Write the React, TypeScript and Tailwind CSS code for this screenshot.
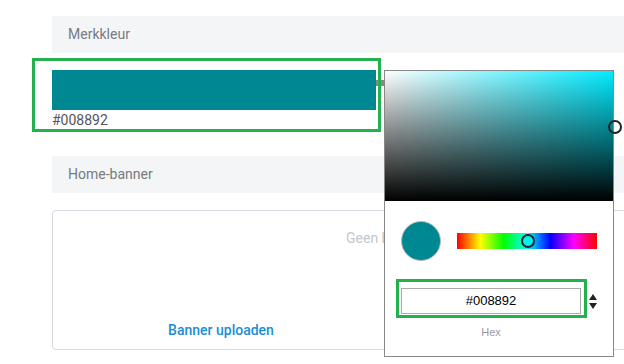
export default function App() {
  return (
    <div className="relative w-[624px] h-[364px] overflow-hidden bg-white font-['Roboto',sans-serif] text-[14px]">
      {/* Page content */}
      <div className="w-[700px] pl-[52px] pt-[16px]">
        <div className="h-[37px] bg-[#f4f5f7] pl-4 flex items-center text-[#777b80]">Merkkleur</div>
        <div className="mt-[17px] h-[40px] w-[324px] bg-[#008892]" />
        <div className="mt-[1px] leading-[18px] text-[#555]">#008892</div>

        <div className="mt-[27px] h-[37px] bg-[#f4f5f7] pl-4 flex items-center text-[#777b80]">Home-banner</div>
        <div className="mt-[17px] h-[140px] border border-[#d5dbe0] rounded-sm flex flex-col">
          <div className="pt-[17px] pl-[293px] text-[#c3c7cb]">Geen banner geüpload</div>
          <div className="mt-auto mb-[8px] w-[336px] text-center font-medium text-[#1b8ed1]">Banner uploaden</div>
        </div>
      </div>

      {/* Popover tab */}
      <div className="absolute left-[376px] top-[80px] w-[8px] h-[6px] bg-[#888]" />

      {/* Colour picker */}
      <div className="absolute left-[384px] top-[70px] w-[230px] h-[287px] bg-white border border-[#888] font-['Liberation_Sans',Arial,sans-serif]">
        <div className="h-[130px] bg-[linear-gradient(to_top,#000,rgba(0,0,0,0)),linear-gradient(to_right,#fff,#00ebff)]" />
        <div className="pt-[20px] pl-[16px] flex items-center">
          <div className="w-[40px] h-[40px] rounded-full bg-[#008892] border border-[#b9b9b9]" />
          <div className="relative ml-[16px] w-[140px] h-[16px] bg-[linear-gradient(to_right,#f00,#ff0,#0f0,#0ff,#00f,#f0f,#f00)]">
            <div className="absolute left-[64px] top-[1px] w-[14px] h-[14px] rounded-full border-2 border-[#222] bg-[#00f4ee]" />
          </div>
        </div>
        <div className="mt-[27px] pl-[16px] flex items-center">
          <div className="w-[180px] h-[26px] border border-[#aaa] flex items-center justify-center text-[13px] text-black">#008892</div>
          <div className="ml-[8px] flex flex-col items-center gap-[3px]">
            <div className="w-0 h-0 border-l-[4px] border-r-[4px] border-b-[6px] border-l-transparent border-r-transparent border-b-[#222]" />
            <div className="w-0 h-0 border-l-[4px] border-r-[4px] border-t-[6px] border-l-transparent border-r-transparent border-t-[#222]" />
          </div>
        </div>
        <div className="mt-[10px] w-[212px] text-center text-[11px] text-[#999]">Hex</div>
      </div>

      {/* Saturation handle */}
      <div className="absolute left-[608px] top-[120px] w-[14px] h-[14px] rounded-full border-2 border-[#222]" />

      {/* Highlights */}
      <div className="absolute left-[32px] top-[58px] w-[349px] h-[74px] border-[3px] border-[#22b14c]" />
      <div className="absolute left-[396px] top-[279px] w-[191px] h-[39px] border-[3px] border-[#22b14c]" />
    </div>
  );
}
